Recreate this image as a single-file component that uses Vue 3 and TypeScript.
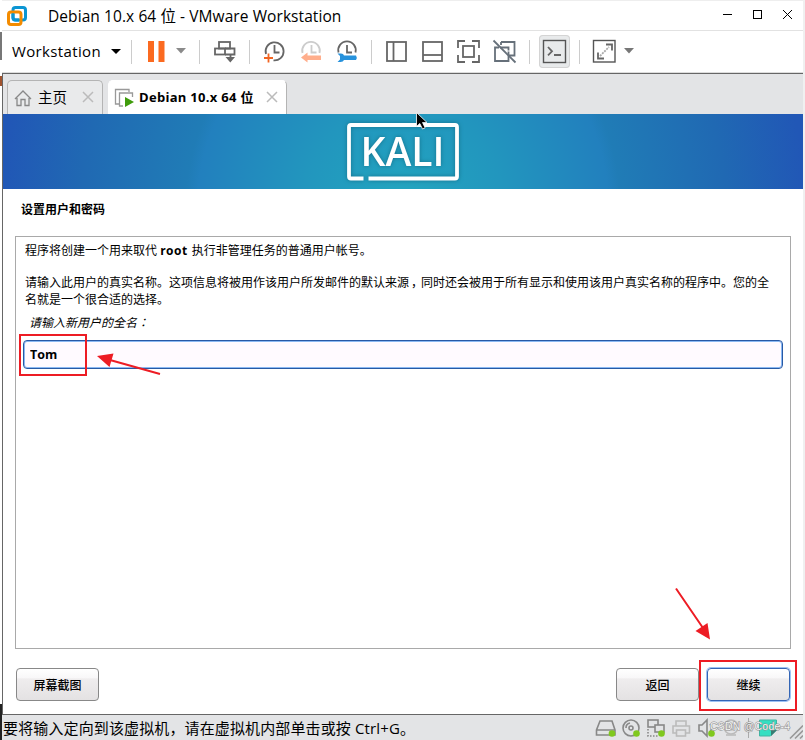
<script setup lang="ts">
import { ref } from 'vue'

const fullName = ref<string>('Tom')
const machine = 'Debian 10.x 64 位'
</script>

<template>
  <div class="desktop">
    <div class="edge"></div>
    <div class="window">
      <header class="titlebar">
        <svg class="logo" width="22" height="22" viewBox="6 5 22 22" fill="none" stroke-width="3">
          <rect x="13" y="7.5" width="12.5" height="12.5" rx="2.5" stroke="#0b95d3" />
          <rect x="8.500" y="12" width="12.500" height="12.500" rx="2.500" stroke="#f38b00" />
          <path d="M13 13.500V17.500Q13 20 15.500 20H19" stroke="#0b95d3" />
        </svg>
        <span class="title">{{ machine }} - VMware Workstation</span>
        <svg class="controls" width="80" height="30" viewBox="715 1 80 30" fill="none" stroke="#000">
          <path d="M723 14.500h9" />
          <rect x="753.500" y="10.500" width="8" height="8" />
          <path d="M783 10l9 9M792 10l-9 9" />
        </svg>
      </header>

      <nav class="toolbar">
        <div class="menu"><span>Workstation</span><i class="caret dark"></i></div>
        <i class="sep"></i>
        <svg width="38" height="41" viewBox="132 31 38 41"><path d="M148 41h6v21h-6zM158.500 41h6v21h-6z" fill="#fb6a20" /></svg>
        <svg width="29" height="41" viewBox="170 31 29 41"><path d="M176 48h10l-5 5.500z" fill="#8a8a8a" /></svg>
        <i class="sep"></i>
        <svg width="49" height="41" viewBox="200 31 49 41" class="ic">
          <rect x="219" y="42" width="11" height="6.500" /><rect x="215" y="48.500" width="10" height="6" /><path d="M225 48.500h9.500v6H225M230.500 54.500v6" />
          <path d="M225.500 57h9.500l-4.700 5.500z" fill="#666" stroke="none" />
        </svg>
        <i class="sep"></i>
        <svg width="42" height="41" viewBox="250 31 42 41" class="ic">
          <path d="M266 54A9 9 0 1 1 273.500 60.300M274.500 45v7.500h5" />
          <path d="M264 58h9M268.500 53.500v9" stroke="#f26522" />
        </svg>
        <svg width="37" height="41" viewBox="292 31 37 41" class="ic">
          <path d="M302.500 53A8.800 8.800 0 1 1 319.500 53M311.500 45v7.500h5" stroke="#ccc" />
          <path d="M301 57.500l6.500-5v3H321v4.500h-13.500v2.500z" fill="#ffae8c" stroke="none" />
        </svg>
        <svg width="42" height="41" viewBox="329 31 42 41" class="ic">
          <path d="M338.500 52.500A8.800 8.800 0 1 1 355.500 52.500M347 45v7.500h5" />
          <path d="M337.500 53.500h3.500q2.500 0 3 2H356q1.500 2 0 4.500h-12q-.8 2-3.500 2h-3l2.500-2.500v-3.500z" fill="#2792dc" stroke="none" />
        </svg>
        <i class="sep"></i>
        <svg width="42" height="41" viewBox="372 31 42 41" class="ic"><rect x="387" y="42" width="19" height="19" /><path d="M393.500 42v19" /></svg>
        <svg width="36" height="41" viewBox="414 31 36 41" class="ic"><rect x="423" y="42" width="19" height="19" /><path d="M423 55h19" /></svg>
        <svg width="37" height="41" viewBox="450 31 37 41" class="ic"><path d="M458 48v-7h7M472 41h7v7M479 55v7h-7M465 62h-7v-7" /><rect x="463" y="46" width="11" height="11" /></svg>
        <svg width="42" height="41" viewBox="487 31 42 41" class="ic slate"><path d="M501 42h13.500v13.500h-6M499 47.500h-4V61h13.500V51.500M501 42v3M500 47.500h8.500v3" /><path d="M493.500 40.500l22 22" /></svg>
        <i class="sep"></i>
        <div class="console">
          <svg width="31" height="33" viewBox="539 35 31 33" class="ic"><rect x="543.500" y="40.500" width="22" height="22" stroke="#555" stroke-width="1.400" /><path d="M548 47l4 4.300-4 4M554 55h7" /></svg>
        </div>
        <i class="sep"></i>
        <svg width="40" height="41" viewBox="580 31 40 41" class="ic"><rect x="593.500" y="40.500" width="21.500" height="21.500" stroke-width="1.400" stroke="#555" /><path d="M600 56l9-9" stroke="#aaa" stroke-dasharray="2 1" /><path d="M606 44.500h6v6M598 52.500v6h6" /></svg>
        <svg width="20" height="41" viewBox="620 31 20 41"><path d="M624 48h10l-5 5.500z" fill="#777" /></svg>
      </nav>

      <div class="tabs">
        <div class="tab home">
          <svg width="18" height="18" viewBox="14 88 18 18" fill="none" stroke="#888" stroke-width="1.300"><path d="M15 98l8-8 8 8M17 97v7.500h4V98.500h4v6h4V97" /></svg>
          <span>主页</span>
          <svg class="x" width="12" height="12" viewBox="0 0 12 12"><path d="M1 1l10 10M11 1L1 11" /></svg>
        </div>
        <div class="tab active">
          <svg width="20" height="20" viewBox="114 87 20 20" fill="none" stroke="#999" stroke-width="1.300"><path d="M119 103h-3.500V88.500H129V91M123 105h-3.500V92H132.500v4" /><path d="M125 96l9 5-9 5z" fill="#3f9c0c" stroke="none" /></svg>
          <span>{{ machine }}</span>
          <svg class="x" width="12" height="12" viewBox="0 0 12 12"><path d="M1 1l10 10M11 1L1 11" /></svg>
        </div>
      </div>

      <main class="screen">
        <div class="banner">
          <svg class="kali" width="124" height="74" viewBox="340 114 124 74">
            <path d="M363.500 178.500H351Q349 178.500 349 176.500V127Q349 125 351 125H455Q457 125 457 127V176.500Q457 178.500 455 178.500H368.500" fill="none" stroke="#fff" stroke-width="3.800" />
            <text x="360.500" y="166" textLength="84" lengthAdjust="spacingAndGlyphs">KALI</text>
          </svg>
        </div>
        <h1>设置用户和密码</h1>
        <section class="panel">
          <p>程序将创建一个用来取代 <b>root</b> 执行非管理任务的普通用户帐号。</p>
          <p class="info">请输入此用户的真实名称。这项信息将被用作该用户所发邮件的默认来源<span class="comma">，</span>同时还会被用于所有显示和使用该用户真实名称的程序中。您的全<br />名就是一个很合适的选择。</p>
          <label for="name">请输入新用户的全名<span class="colon">：</span></label>
          <input id="name" v-model="fullName" type="text" spellcheck="false" />
        </section>
        <div class="actions">
          <button>屏幕截图</button>
          <button class="back">返回</button>
          <button class="next">继续</button>
        </div>
      </main>

      <footer class="status">
        <span>要将输入定向到该虚拟机，请在虚拟机内部单击或按 Ctrl+G。</span>
        <svg width="210" height="25" viewBox="593 715 210 25" fill="none" stroke="#888" stroke-width="1.600">
          <path d="M600 721h12l3 9v5h-18.500v-5zM597 730h18" />
          <circle cx="631" cy="728" r="8" /><circle cx="631" cy="728" r="2" /><path d="M626 728a5 5 0 0 1 4-5" />
          <rect x="648" y="720" width="10" height="7" /><rect x="655" y="725" width="9" height="7" fill="#e3e4e6" /><path d="M648 729v7h10" stroke-dasharray="1.500 1.500" />
          <g stroke="#bbb"><path d="M676 726v-5h10v5M676 733h-3v-7h16.500v7H686" /><rect x="676.500" y="730" width="9" height="6" /></g>
          <path d="M699 725h3l5-5v16l-5-5h-3zM710 724q3 4 0 8" />
          <g stroke="#bbb"><circle cx="731" cy="727" r="7" /><circle cx="731" cy="727" r="3" /><path d="M726 735h10" /></g>
          <path d="M748.500 718v20" stroke="#aaa" stroke-width="1" />
          <path d="M759.500 720h17v10l-6 6h-11z" fill="#34dfc2" stroke="#40b5a3" stroke-width="1" /><path d="M777 730h-6v6z" fill="#397c73" stroke="none" />
          <g fill="#80c81e" stroke="none"><circle cx="612" cy="733.500" r="3.300" /><circle cx="636.500" cy="733.500" r="3.300" /><circle cx="661.500" cy="733.500" r="3.300" /><circle cx="711.500" cy="733.500" r="3.300" /></g>
          <path d="M790 738.500l13-13M795 738.500l8-8M800 738.500l3-3" stroke="#999" />
          <text class="mark" x="710" y="729.500" textLength="80">CSDN @Code-4</text>
        </svg>
      </footer>
    </div>

    <svg class="notes" width="805" height="740" viewBox="0 0 805 740">
      <g fill="none" stroke="#ed1c24" stroke-width="2">
        <rect x="20" y="335" width="66" height="40" /><rect x="700" y="661" width="96" height="49" />
        <path d="M160 374L110 360M676 588.500L703 628" />
      </g>
      <path d="M97 356l16.500-2.500-4 13.500zM710 639.500l-14.500-8.500 12-8z" fill="#ed1c24" />
      <path d="M416.500 112.500v14l3.300-3 2.700 5.500 2.600-1.200-2.600-5.300h4.500z" fill="#000" stroke="#fff" stroke-width=".8" />
    </svg>
  </div>
</template>

<style>
body { margin: 0; overflow: hidden; }
</style>

<style scoped>
* { box-sizing: border-box; }
.desktop { position: relative; display: flex; width: 805px; height: 740px; background: #f0f0f0; font-family: "Open Sans", "Noto Sans CJK SC", sans-serif; color: #000; overflow: hidden; }
.edge { width: 2px; background: linear-gradient(#fff 32px, #777 32px 60px, #fff 60px 76px, #a0522d 76px 86px, #fff 86px 704px, #222 704px); }
.window { display: flex; flex-direction: column; width: 801px; background: #fff; }
.titlebar { display: flex; align-items: center; height: 31px; border-top: 1px solid #eee; border-bottom: 1px solid #e2e2e2; padding-left: 4px; }
.title { margin-left: 20px; padding-bottom: 1px; font-size: 15.5px; letter-spacing: .08px; white-space: nowrap; }
.controls { margin-left: auto; margin-right: 8px; }
.toolbar { display: flex; align-items: center; height: 42px; padding-left: 1px; border-bottom: 1px solid #dcdcdc; flex: none; }
.toolbar svg { flex: none; }
.menu { display: flex; align-items: center; width: 128px; padding-left: 9px; font-size: 15px; letter-spacing: .36px; flex: none; }
.menu span { padding-bottom: 2px; }
.caret { margin-left: auto; margin-right: 10px; border: 5px solid transparent; border-top-color: #000; border-bottom: 0; }
.sep { width: 1px; height: 24px; background: #ccc; flex: none; }
.ic { fill: none; stroke: #666; stroke-width: 1.800; }
.slate { stroke: #66707a; }
.console { display: flex; width: 49px; padding-left: 9px; flex: none; }
.console svg { border-radius: 4px; background: #e8eaeb; box-shadow: inset 0 0 0 1px #d4d4d4; }
.tabs { display: flex; align-items: flex-end; height: 41px; background: #e3e4e6; border-top: 1px solid #666; border-left: 1px solid #666; padding-left: 4px; flex: none; }
.tab { display: flex; align-items: center; height: 34px; border: 1px solid #b4b4b4; border-bottom: 0; border-radius: 5px 5px 0 0; }
.tab span { padding-bottom: 3px; }
.home { width: 96px; padding-left: 6px; background: #e9eaeb; font-size: 14px; }
.home span { margin-left: 6px; font-size: 14.500px; }
.tab .x { margin-left: auto; margin-right: 8px; margin-bottom: 2px; stroke: #bbb; stroke-width: 1.500; fill: none; }
.active { width: 179px; margin-left: 5px; padding-left: 5px; background: #fff; border-left-color: #fff; border-top-color: #fff; }
.active span { margin-left: 5px; font-size: 13px; font-weight: 700; letter-spacing: .3px; white-space: nowrap; }
.screen { display: flex; flex-direction: column; height: 601px; border-left: 1px solid #666; border-bottom: 1px solid #666; flex: none; background: #fff; }
.banner { display: flex; justify-content: center; height: 75px; padding-right: 2px; flex: none; background: radial-gradient(circle 402px at 400px 91px, #22a6bf 0, #2296be 25%, #2280be 51%, #207cb6 54%, #2069b3 80%, #2157b6 100%); }
.kali text { font: 600 39px "Open Sans", sans-serif; fill: #fff; }
.kali { filter: drop-shadow(0 0 2px #15718c); }
h1 { margin: 12px 0 0 18px; height: 17px; line-height: 17px; font-size: 12px; font-weight: 700; }
.panel { margin: 18px 12px 0; height: 413px; border: 1px solid #a9a9a9; padding: 5px 7px 0; font-size: 12px; line-height: 17px; flex: none; }
.panel p { margin: 0 0 0 2px; white-space: nowrap; }
.panel p b { letter-spacing: .5px; margin-right: 1px; }
.panel .info { margin-top: 15px; }
.comma { display: inline-block; width: 12px; text-indent: 2px; line-height: 12px; }
.colon { font-family: "Noto Sans CJK TC", sans-serif; }
label { display: block; margin: 5px 0 0 6px; font-style: italic; }
input { display: block; width: 760px; height: 29px; margin-top: 9px; padding: 0 6px; border: 1px solid #2859a5; border-radius: 4px; box-shadow: inset 0 0 0 1px #8bb9f3; outline: 0; background: #fffaff; font: 700 12.500px "Open Sans", sans-serif; color: #000; }
.actions { display: flex; margin: 19px 13px 0; }
button { width: 83px; height: 33px; padding: 0; border: 1px solid #888; border-radius: 4px; background: linear-gradient(#fff, #f8f7f8 30%, #efedee 31%, #e4e2e3); font: 500 12px "Noto Sans CJK SC", sans-serif; color: #000; }
.back { margin-left: auto; }
.next { margin-left: 8px; border-color: #3465b5; box-shadow: 0 0 0 1px #9cc2f4; }
.status { display: flex; align-items: center; height: 25px; padding-left: 1px; background: #e3e4e6; font-size: 15px; letter-spacing: .13px; white-space: nowrap; }
.status svg { margin-left: auto; flex: none; letter-spacing: 0; }
.mark { font: 10.500px "Liberation Sans", sans-serif; fill: #f4f4f4; stroke: #8a8a8a; stroke-width: 1; paint-order: stroke; }
.notes { position: absolute; left: 0; top: 0; pointer-events: none; }
</style>
